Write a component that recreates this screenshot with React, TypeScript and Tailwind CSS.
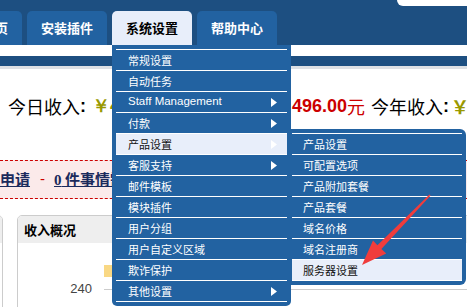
import React from "react";

const cjk = '"Noto Sans CJK SC", "Liberation Sans", sans-serif';

const mainItems: { label: string; arrow?: boolean; active?: boolean }[] = [
  { label: "常规设置" },
  { label: "自动任务" },
  { label: "Staff Management", arrow: true },
  { label: "付款", arrow: true },
  { label: "产品设置", arrow: true, active: true },
  { label: "客服支持", arrow: true },
  { label: "邮件模板" },
  { label: "模块插件" },
  { label: "用户分组" },
  { label: "用户自定义区域" },
  { label: "欺诈保护" },
  { label: "其他设置", arrow: true },
];

const subItems: { label: string; active?: boolean }[] = [
  { label: "产品设置" },
  { label: "可配置选项" },
  { label: "产品附加套餐" },
  { label: "产品套餐" },
  { label: "域名价格" },
  { label: "域名注册商" },
  { label: "服务器设置", active: true },
];

function Tri() {
  return (
    <svg width="6" height="9" viewBox="0 0 6 9" className="shrink-0">
      <path d="M0 0 L6 4.5 L0 9 Z" fill="#ffffff" />
    </svg>
  );
}

export default function App() {
  return (
    <div
      className="relative w-[467px] h-[307px] overflow-hidden bg-white"
      style={{ fontFamily: cjk }}
    >
      {/* header */}
      <div className="h-[45px] bg-[#1d4f81] flex flex-col">
        <div className="h-[11px] flex justify-end">
          <div className="w-[70px] h-[6px] bg-white rounded-bl-[6px]" />
        </div>
        <div className="h-[34px] flex gap-[5px] ml-[-58px]">
          {["管理首页", "安装插件", "系统设置", "帮助中心"].map((t) => (
            <div
              key={t}
              className={
                t === "系统设置"
                  ? "w-[80px] h-[34px] shrink-0 rounded-t-[5px] bg-[#e8eefa] text-black font-bold text-[13px] flex items-center justify-center"
                  : "w-[80px] h-[34px] shrink-0 rounded-t-[5px] bg-[#2262a1] text-white font-bold text-[13px] flex items-center justify-center"
              }
            >
              {t}
            </div>
          ))}
        </div>
      </div>
      <div className="h-[11px] bg-white" />
      <div className="h-[10px] bg-[#1d4f81]" />
      <div className="h-[3px] bg-[#dde0e4]" />

      {/* income line */}
      <div className="mt-[25px] h-[24px] flex items-center text-[18px] leading-[24px] whitespace-nowrap text-black">
        <div className="w-[292px] shrink-0 pl-[8px] overflow-hidden flex items-center">
          <span>今日收入</span>
          <span className="font-bold" style={{ fontFamily: '"Liberation Sans", sans-serif' }}>:</span>
          <span className="ml-[6px] font-bold text-[#999900]" style={{ fontFamily: '"Liberation Sans", sans-serif' }}>
            ￥4
          </span>
        </div>
        <span className="font-bold text-[#cc0000]" style={{ fontFamily: '"Liberation Sans", sans-serif' }}>
          496.00
        </span>
        <span className="text-[#cc0000]">元</span>
        <span className="ml-[6px]">今年收入</span>
        <span className="font-bold" style={{ fontFamily: '"Liberation Sans", sans-serif' }}>:</span>
        <span className="ml-[2px] font-bold text-[#999900]">￥</span>
      </div>

      {/* pink notice band */}
      <div className="mt-[42px] h-[39px] bg-[#fbeaea] border-y border-dashed border-[#cc0000] flex items-center whitespace-nowrap text-[15px] text-[#1b2a5c]">
        <span className="underline font-bold">申请</span>
        <span className="ml-[10px] text-[#cc0000]" style={{ fontFamily: '"Liberation Sans", sans-serif' }}>-</span>
        <span className="ml-[9px] underline font-bold">
          <span style={{ fontFamily: '"Liberation Serif", serif' }}>0</span> 件事情需要处理
        </span>
      </div>

      {/* panels */}
      <div className="mt-[16px] flex gap-[14px] ml-[-57px]">
        <div className="w-[60px] h-[120px] shrink-0 border border-[#cccccc] rounded-t-[5px] overflow-hidden">
          <div className="h-[27px] bg-[#eeeeee]" />
        </div>
        <div className="w-[500px] h-[120px] shrink-0 border border-[#cccccc] rounded-t-[5px] overflow-hidden">
          <div className="h-[27px] bg-[#eeeeee] flex items-center pl-[6px] text-[13px] font-bold text-black">
            收入概况
          </div>
          <div className="mt-[22px] pl-[86px]">
            <div className="h-[12px] w-[300px] bg-[#f9d884]" />
          </div>
          <div className="mt-[4px] h-[16px] flex items-center">
            <span
              className="w-[74px] text-right text-[13px] text-[#444444]"
              style={{ fontFamily: '"Liberation Sans", sans-serif' }}
            >
              240
            </span>
            <div className="ml-[12px] h-[1px] flex-1 bg-[#cccccc]" />
          </div>
        </div>
      </div>

      {/* main dropdown */}
      <div className="absolute left-[112px] top-[45px] w-[179px] bg-[#2262a1] rounded-b-[5px] pt-[4px] pb-[4px] px-[4px]">
        <div className="border-t border-white">
          {mainItems.map((it) => (
            <div
              key={it.label}
              className={
                it.active
                  ? "h-[21px] border-b border-white bg-[#e8eefa] text-[#111111] flex items-center justify-between pl-[12px] pr-[10px] text-[11px] whitespace-nowrap"
                  : "h-[21px] border-b border-white text-white flex items-center justify-between pl-[12px] pr-[10px] text-[11px] whitespace-nowrap"
              }
            >
              <span
                style={
                  it.label === "Staff Management"
                    ? { fontFamily: '"Liberation Sans", sans-serif', fontSize: "11.5px" }
                    : undefined
                }
              >
                {it.label}
              </span>
              {it.arrow ? <Tri /> : null}
            </div>
          ))}
        </div>
      </div>

      {/* sub dropdown */}
      <div className="absolute left-[290px] top-[129px] w-[176px] bg-[#2262a1] rounded-r-[6px] pt-[4px] pb-[4px] pl-[2px] pr-[4px]">
        <div className="border-t border-white">
          {subItems.map((it) => (
            <div
              key={it.label}
              className={
                it.active
                  ? "h-[21px] border-b border-white bg-[#e8eefa] text-[#111111] flex items-center pl-[11px] text-[11px] whitespace-nowrap"
                  : "h-[21px] border-b border-white text-white flex items-center pl-[11px] text-[11px] whitespace-nowrap"
              }
            >
              {it.label}
            </div>
          ))}
        </div>
      </div>

      {/* red arrow annotation */}
      <svg
        className="absolute left-0 top-0 pointer-events-none"
        width="467"
        height="307"
        viewBox="0 0 467 307"
      >
        <polygon
          points="362,265 373,240.5 377.4,245.2 429.4,194.4 430.6,195.6 381.4,249 386.2,253.6"
          fill="#f03c3c"
        />
      </svg>
    </div>
  );
}
